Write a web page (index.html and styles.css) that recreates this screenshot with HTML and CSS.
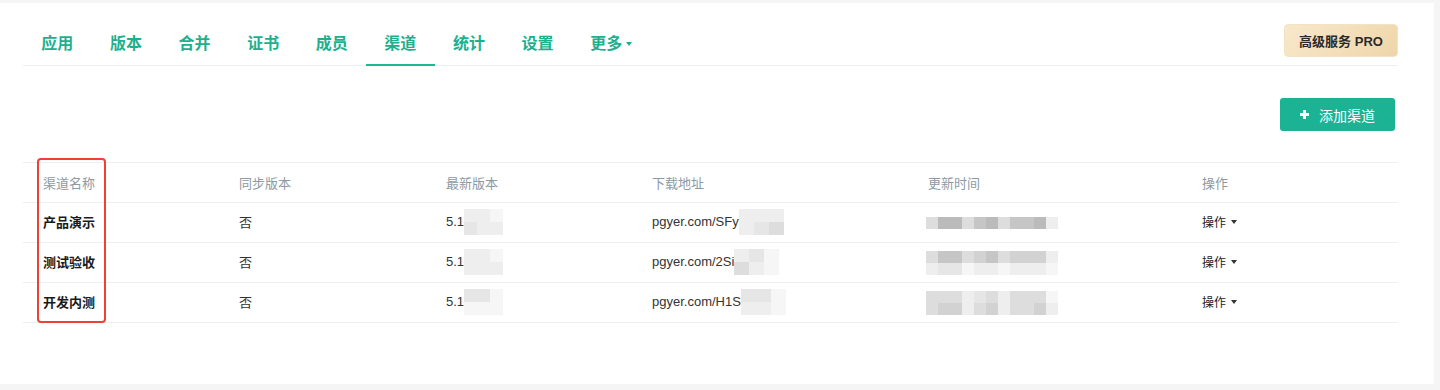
FILE: index.html
```html
<!DOCTYPE html>
<html lang="zh-CN">
<head>
  <meta charset="UTF-8">
  <meta name="viewport" content="width=device-width, initial-scale=1.0">
  <title>渠道</title>
  <link rel="stylesheet" href="styles.css">
</head>
<body>

<div class="panel">
  <header class="topbar">
    <nav class="tabs">
      <a class="tab" href="#">应用</a>
      <a class="tab" href="#">版本</a>
      <a class="tab" href="#">合并</a>
      <a class="tab" href="#">证书</a>
      <a class="tab" href="#">成员</a>
      <a class="tab active" href="#">渠道</a>
      <a class="tab" href="#">统计</a>
      <a class="tab" href="#">设置</a>
      <a class="tab" href="#">更多<span class="caret green"></span></a>
    </nav>
    <button class="pro-btn">高级服务 PRO</button>
  </header>

  <div class="toolbar">
    <button class="add-btn">
      <svg width="9" height="9" viewBox="0 0 9 9"><rect x="3" y="0" width="3" height="9" fill="#fff"/><rect x="0" y="3" width="9" height="3" fill="#fff"/></svg>
      <span>添加渠道</span>
    </button>
  </div>

  <div class="table-wrap">
    <div class="highlight"></div>
    <div class="row head">
      <div class="cell">渠道名称</div>
      <div class="cell">同步版本</div>
      <div class="cell">最新版本</div>
      <div class="cell">下载地址</div>
      <div class="cell">更新时间</div>
      <div class="cell">操作</div>
    </div>

    <div class="row">
      <div class="cell name">产品演示</div>
      <div class="cell">否</div>
      <div class="cell">5.1<span class="mosaic m3"><i class="c2"></i><i class="c2"></i><i class="c1"></i><i class="c3"></i><i class="c2"></i><i class="c2"></i></span></div>
      <div class="cell">pgyer.com/SFy<span class="mosaic m3 url"><i class="c2"></i><i class="c2"></i><i class="c2"></i><i class="c2"></i><i class="c3"></i><i class="c4"></i></span></div>
      <div class="cell time"><span class="mosaic m11"><i class="c4"></i><i class="c7"></i><i class="c7"></i><i class="c4"></i><i class="c6"></i><i class="c7"></i><i class="c4"></i><i class="c6"></i><i class="c6"></i><i class="c7"></i><i class="c2"></i></span></div>
      <div class="cell action">操作<span class="caret"></span></div>
    </div>

    <div class="row">
      <div class="cell name">测试验收</div>
      <div class="cell">否</div>
      <div class="cell">5.1<span class="mosaic m3"><i class="c2"></i><i class="c2"></i><i class="c1"></i><i class="c2"></i><i class="c2"></i><i class="c2"></i></span></div>
      <div class="cell">pgyer.com/2Si<span class="mosaic m3 url"><i class="c2"></i><i class="c3"></i><i class="c1"></i><i class="c4"></i><i class="c2"></i><i class="c1"></i></span></div>
      <div class="cell time"><span class="mosaic m11"><i class="c4"></i><i class="c6"></i><i class="c6"></i><i class="c4"></i><i class="c5"></i><i class="c6"></i><i class="c4"></i><i class="c5"></i><i class="c5"></i><i class="c5"></i><i class="c2"></i><i class="c2"></i><i class="c3"></i><i class="c3"></i><i class="c1"></i><i class="c2"></i><i class="c2"></i><i class="c1"></i><i class="c2"></i><i class="c2"></i><i class="c2"></i><i class="c1"></i></span></div>
      <div class="cell action">操作<span class="caret"></span></div>
    </div>

    <div class="row">
      <div class="cell name">开发内测</div>
      <div class="cell">否</div>
      <div class="cell">5.1<span class="mosaic m3"><i class="c3"></i><i class="c3"></i><i class="c1"></i><i class="c1"></i><i class="c1"></i><i class="c1"></i></span></div>
      <div class="cell">pgyer.com/H1S<span class="mosaic m3 url"><i class="c3"></i><i class="c3"></i><i class="c1"></i><i class="c2"></i><i class="c2"></i><i class="c1"></i></span></div>
      <div class="cell time"><span class="mosaic m11"><i class="c4"></i><i class="c4"></i><i class="c4"></i><i class="c2"></i><i class="c3"></i><i class="c4"></i><i class="c2"></i><i class="c4"></i><i class="c4"></i><i class="c4"></i><i class="c1"></i><i class="c4"></i><i class="c5"></i><i class="c5"></i><i class="c2"></i><i class="c4"></i><i class="c5"></i><i class="c2"></i><i class="c4"></i><i class="c4"></i><i class="c5"></i><i class="c2"></i></span></div>
      <div class="cell action">操作<span class="caret"></span></div>
    </div>
  </div>
</div>

</body>
</html>
```

FILE: styles.css
```css
body { margin: 0; background: #f5f5f5; font-family: "Liberation Sans", "Noto Sans CJK SC", sans-serif; color: #333; }
.panel { background: #fff; margin: 3px 6px 0 0; height: 381px; padding: 0 36px 0 23px; }

/* top tabs */
.topbar { display: flex; justify-content: space-between; height: 62px; border-bottom: 1px solid #efefef; }
.tabs { display: flex; align-self: flex-end; margin-bottom: -1px; }
.tab { display: flex; align-items: center; padding: 0 18.3px 10px; line-height: 20px; font-size: 16px; font-weight: bold; color: #1eb08e; text-decoration: none; border-bottom: 2px solid transparent; }
.tab.active { border-bottom-color: #1eb892; }
.caret { display: inline-block; width: 0; height: 0; margin-left: 5px; border-left: 3.5px solid transparent; border-right: 3.5px solid transparent; border-top: 4px solid #333; }
.caret.green { border-top-color: #1eb08e; margin-left: 4px; }
.pro-btn { align-self: flex-start; margin: 21px 0 0; height: 33px; width: 114px; padding: 0; border: 1px solid #f3e3c6; border-radius: 4px; background: linear-gradient(135deg, #f8e8cb, #efd6a9); font-family: inherit; font-size: 13px; font-weight: bold; color: #2a2a2a; }

/* toolbar */
.toolbar { display: flex; justify-content: flex-end; padding: 32px 3px 0 0; }
.add-btn { display: flex; align-items: center; gap: 10px; height: 33px; width: 115px; padding: 0 0 0 20px; border: none; border-radius: 3px; background: #1bb394; color: #fff; font-family: inherit; font-size: 14px; }

/* table */
.table-wrap { position: relative; margin-top: 31px; border-top: 1px solid #eef0f0; }
.row { display: grid; grid-template-columns: 196px 207px 206px 276px 274px 216px; height: 39px; border-bottom: 1px solid #eef0f0; }
.cell { display: flex; align-items: center; padding: 0 0 2px 20px; font-size: 13px; color: #333; }
.head .cell { color: #8d9aa3; padding-bottom: 1px; }
.cell.name { font-weight: bold; color: #1a1a1a; }
.cell.action { font-size: 12px; color: #222; }
.cell.time { padding: 0 0 0 18px; }
.highlight { position: absolute; left: 14px; top: -5px; width: 65px; height: 161px; border: 2px solid #ee4035; border-radius: 4px; }

/* blurred values */
.mosaic { display: inline-grid; }
.mosaic i { display: block; height: 13px; }
.m3 { grid-template-columns: repeat(3, 13px); }
.m3.url { grid-template-columns: repeat(3, 15px); }
.m11 { grid-template-columns: repeat(11, 12px); }
.m11 i { height: 12px; }
.c1 { background: #f6f6f6; }
.c2 { background: #eeeeee; }
.c3 { background: #e6e6e6; }
.c4 { background: #dddddd; }
.c5 { background: #d2d2d2; }
.c6 { background: #c6c6c6; }
.c7 { background: #bbbbbb; }
```
